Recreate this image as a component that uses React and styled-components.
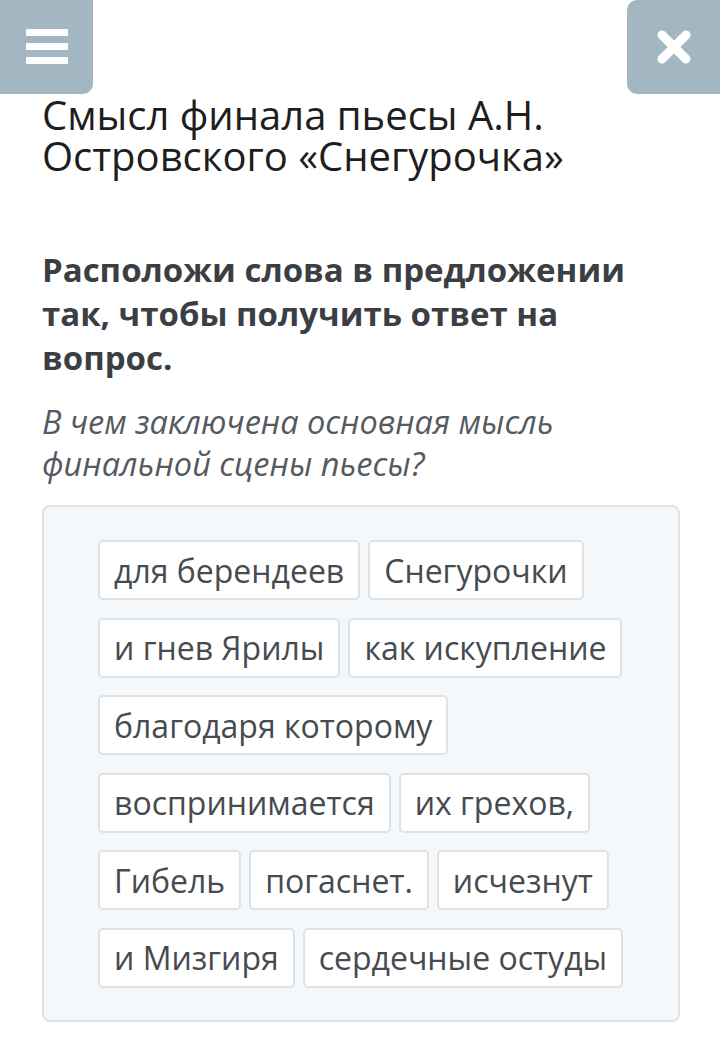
import React from 'react';
import styled, { createGlobalStyle } from 'styled-components';

const GlobalStyle = createGlobalStyle`
  html, body {
    margin: 0;
    padding: 0;
    background: #fff;
  }
  body {
    font-family: "Open Sans", "Noto Sans", sans-serif;
  }
`;

const Page = styled.div`
  width: 720px;
  min-height: 1043px;
  box-sizing: border-box;
`;

const TopBar = styled.div`
  display: flex;
  justify-content: space-between;
  height: 94px;
`;

const IconButton = styled.button`
  width: 93px;
  height: 94px;
  border: none;
  padding: 0;
  background: #a3b7c3;
  border-radius: ${({ $side }) => ($side === 'left' ? '0 0 10px 0' : '10px 0 0 10px')};
  display: flex;
  align-items: center;
  justify-content: center;
`;

const Content = styled.div`
  padding: 0 40px 0 42px;
`;

const Title = styled.h1`
  margin: 0;
  font-weight: 400;
  font-size: 40px;
  line-height: 41px;
  color: #1e1e1e;
`;

const Instruction = styled.h2`
  margin: 72px 0 0;
  font-weight: 700;
  font-size: 33px;
  line-height: 44px;
  color: #3b3f44;
`;

const Question = styled.p`
  margin: 21px 0 0;
  font-style: italic;
  font-size: 32.5px;
  line-height: 42px;
  color: #555a5f;
`;

const WordBox = styled.div`
  margin-top: 20px;
  background: #f4f8fb;
  border: 2px solid #dde3e8;
  border-radius: 8px;
  padding: 33px 50px 32px 54px;
  display: flex;
  flex-wrap: wrap;
  gap: 17.5px 8px;
  align-content: flex-start;
`;

const Chip = styled.div`
  height: 60px;
  box-sizing: border-box;
  padding: 0 14px;
  display: flex;
  align-items: center;
  background: #fff;
  border: 2px solid #dfe2e5;
  border-radius: 5px;
  font-size: 32px;
  color: #474b50;
  white-space: nowrap;
`;

const words = [
  'для берендеев',
  'Снегурочки',
  'и гнев Ярилы',
  'как искупление',
  'благодаря которому',
  'воспринимается',
  'их грехов,',
  'Гибель',
  'погаснет.',
  'исчезнут',
  'и Мизгиря',
  'сердечные остуды',
];

const MenuIcon = () => (
  <svg width="42" height="36" viewBox="0 0 42 36">
    <rect x="0" y="0" width="42" height="7" rx="1" fill="#fff" />
    <rect x="0" y="14" width="42" height="7" rx="1" fill="#fff" />
    <rect x="0" y="28" width="42" height="7" rx="1" fill="#fff" />
  </svg>
);

const CloseIcon = () => (
  <svg width="36" height="36" viewBox="0 0 36 36">
    <path d="M6 6 L30 30 M30 6 L6 30" stroke="#fff" strokeWidth="9" strokeLinecap="round" />
  </svg>
);

export default function App() {
  return (
    <Page>
      <GlobalStyle />
      <TopBar>
        <IconButton $side="left" aria-label="menu">
          <MenuIcon />
        </IconButton>
        <IconButton $side="right" aria-label="close">
          <CloseIcon />
        </IconButton>
      </TopBar>
      <Content>
        <Title>Смысл финала пьесы А.Н. Островского «Снегурочка»</Title>
        <Instruction>Расположи слова в предложении так, чтобы получить ответ на вопрос.</Instruction>
        <Question>В чем заключена основная мысль финальной сцены пьесы?</Question>
        <WordBox>
          {words.map((w) => (
            <Chip key={w}>{w}</Chip>
          ))}
        </WordBox>
      </Content>
    </Page>
  );
}
